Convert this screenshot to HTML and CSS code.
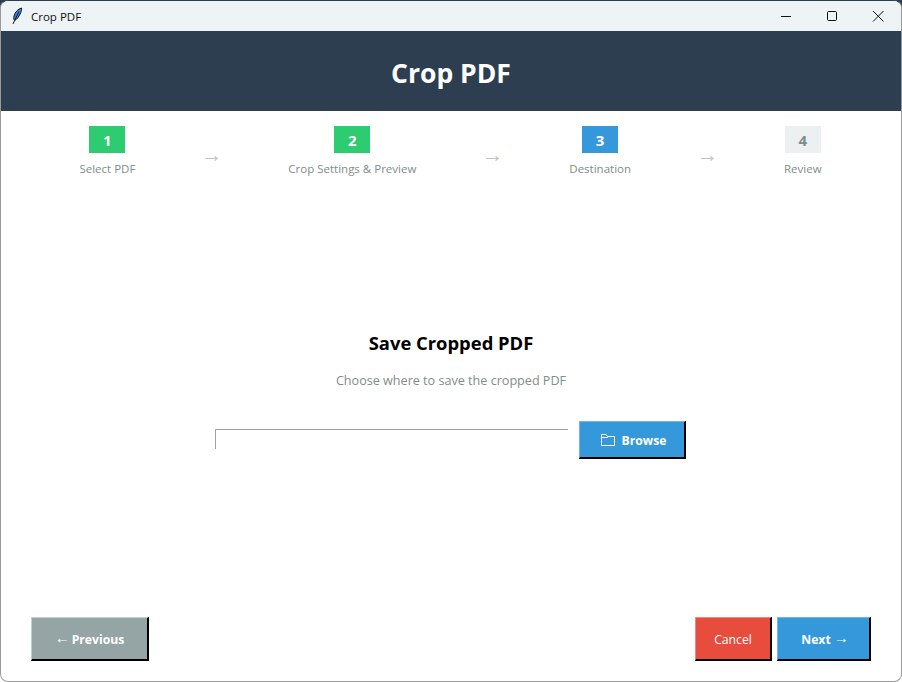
FILE: index.html
```html
<!DOCTYPE html>
<html lang="en">
<head>
    <meta charset="UTF-8">
    <title>Crop PDF</title>
    <link rel="stylesheet" href="styles.css">
</head>
<body>
    <div class="window">
        <div class="titlebar">
            <svg class="feather" width="12" height="18" viewBox="0 0 12 18">
                <path d="M10.500 1C7 2 4 5 3 9C2.500 11 2.700 12.500 3.500 13.500C6 12.500 8.500 9 9.800 5.500C10.400 4 10.800 2.500 10.500 1Z" fill="#3b82d8" stroke="#10182c" stroke-width="1"/>
                <path d="M8 4.500L2 17" fill="none" stroke="#10182c" stroke-width="1"/>
            </svg>
            <span class="app-name">Crop PDF</span>
            <div class="controls">
                <svg class="ctl" width="46" height="30" viewBox="0 0 46 30"><path d="M18 15.500H28" stroke="#111" stroke-width="1"/></svg>
                <svg class="ctl" width="46" height="30" viewBox="0 0 46 30"><rect x="18.500" y="10.500" width="9" height="9" rx="1" fill="none" stroke="#111" stroke-width="1"/></svg>
                <svg class="ctl" width="46" height="30" viewBox="0 0 46 30"><path d="M18 10L28.500 20.500M28.500 10L18 20.500" stroke="#111" stroke-width="1"/></svg>
            </div>
        </div>

        <div class="header">
            <h1>Crop PDF</h1>
        </div>

        <div class="steps">
            <div class="step">
                <div class="num done">1</div>
                <div class="lbl">Select PDF</div>
            </div>
            <div class="arrow">→</div>
            <div class="step">
                <div class="num done">2</div>
                <div class="lbl">Crop Settings &amp; Preview</div>
            </div>
            <div class="arrow">→</div>
            <div class="step">
                <div class="num current">3</div>
                <div class="lbl">Destination</div>
            </div>
            <div class="arrow">→</div>
            <div class="step">
                <div class="num todo">4</div>
                <div class="lbl">Review</div>
            </div>
        </div>

        <div class="content">
            <h2>Save Cropped PDF</h2>
            <p class="hint">Choose where to save the cropped PDF</p>
            <div class="path-row">
                <input type="text" class="path">
                <button class="btn blue browse">
                    <svg width="16" height="14" viewBox="0 0 16 14"><path d="M1.500 12.500V1.500H6L7.500 3.500H14.500V12.500Z M1.500 4.500H7.500L8.500 3.500" fill="none" stroke="#fff" stroke-width="1"/></svg>
                    Browse
                </button>
            </div>
        </div>

        <div class="footer">
            <button class="btn gray prev"><span class="thin">←</span> Previous</button>
            <div class="right">
                <button class="btn red cancel">Cancel</button>
                <button class="btn blue next">Next <span class="thin">→</span></button>
            </div>
        </div>
    </div>
</body>
</html>
```

FILE: styles.css
```css
*{
    margin: 0;
    padding: 0;
    box-sizing: border-box;
}
body{
    width: 902px;
    height: 682px;
    overflow: hidden;
    font-family: "Open Sans", "Noto Sans", sans-serif;
    background: linear-gradient(#2c3e50 66px, #fff 66px);
}
.window{
    height: 682px;
    display: flex;
    flex-direction: column;
    background: #fff;
    border: 1px solid #9a9a9a;
    border-top: 1px solid #2c3e50;
    border-radius: 8px;
    overflow: hidden;
}
.titlebar{
    height: 30px;
    flex: none;
    display: flex;
    align-items: center;
    background: #eef3f5;
    padding-left: 10px;
}
.feather{
    margin-right: 8px;
}
.app-name{
    font-size: 11.500px;
    color: #111;
}
.controls{
    margin-left: auto;
    display: flex;
}
.header{
    height: 80px;
    flex: none;
    background: #2c3e50;
    display: flex;
    align-items: center;
    justify-content: center;
    padding-top: 4px;
}
h1{
    font-size: 26.500px;
    font-weight: 700;
    color: #fff;
    line-height: 1;
}
.steps{
    display: flex;
    justify-content: center;
    align-items: flex-start;
    gap: 68.500px;
    padding-top: 15px;
    padding-right: 1px;
    flex: none;
}
.step{
    display: flex;
    flex-direction: column;
    align-items: center;
    gap: 8px;
}
.num{
    width: 36px;
    height: 27px;
    display: flex;
    align-items: center;
    justify-content: center;
    font-size: 15px;
    font-weight: 700;
    color: #fff;
}
.done{
    background: #2ecc71;
}
.current{
    background: #3498db;
}
.todo{
    background: #ecf0f1;
    color: #7f8c8d;
}
.lbl{
    font-size: 11.500px;
    line-height: 16px;
    color: #7f8c8d;
    white-space: nowrap;
}
.arrow{
    width: 16px;
    display: flex;
    justify-content: center;
    font-family: "Liberation Sans", sans-serif;
    font-size: 21px;
    line-height: 20px;
    color: #bdc3c7;
    margin-top: 19px;
}
.content{
    flex: 1;
    display: flex;
    flex-direction: column;
    align-items: center;
    padding-top: 154px;
}
h2{
    font-size: 18.400px;
    line-height: 24px;
    font-weight: 700;
    color: #000;
}
.hint{
    font-size: 12.600px;
    line-height: 16px;
    color: #7f8c8d;
    margin-top: 18px;
}
.path-row{
    display: flex;
    align-items: flex-start;
    margin-top: 32px;
    margin-right: 1px;
}
.path{
    width: 353px;
    height: 20px;
    margin-top: 8px;
    margin-right: 11px;
    border: none;
    border-top: 1px solid #a0a0a0;
    border-left: 1px solid #a0a0a0;
    background: #fff;
}
.btn{
    font-family: "Open Sans", "Noto Sans", sans-serif;
    font-size: 12.200px;
    font-weight: 700;
    color: #fff;
    display: flex;
    align-items: center;
    justify-content: center;
    gap: 4px;
    padding-top: 1px;
    border-style: solid;
    border-width: 1px 2px 2px 1px;
    border-right-color: #000;
    border-bottom-color: #000;
}
.thin{
    font-family: "Liberation Sans", sans-serif;
    font-weight: 400;
    font-size: 15px;
    line-height: 14px;
    margin-top: -3px;
}
.blue{
    background: #3498db;
    border-top-color: #6db8ea;
    border-left-color: #6db8ea;
}
.gray{
    background: #95a5a6;
    border-top-color: #c3d0d1;
    border-left-color: #c3d0d1;
}
.red{
    background: #e74c3c;
    border-top-color: #f08a7e;
    border-left-color: #f08a7e;
    font-weight: 400;
}
.browse{
    width: 107px;
    height: 38px;
    gap: 6px;
    padding-left: 2px;
}
.footer{
    flex: none;
    display: flex;
    justify-content: space-between;
    padding: 0 30px 20px 30px;
}
.right{
    display: flex;
    gap: 5px;
}
.prev{
    width: 118px;
    height: 44px;
    gap: 2px;
}
.cancel{
    width: 77px;
    height: 44px;
}
.next{
    width: 94px;
    height: 44px;
    gap: 3px;
    padding-left: 3px;
}
```
